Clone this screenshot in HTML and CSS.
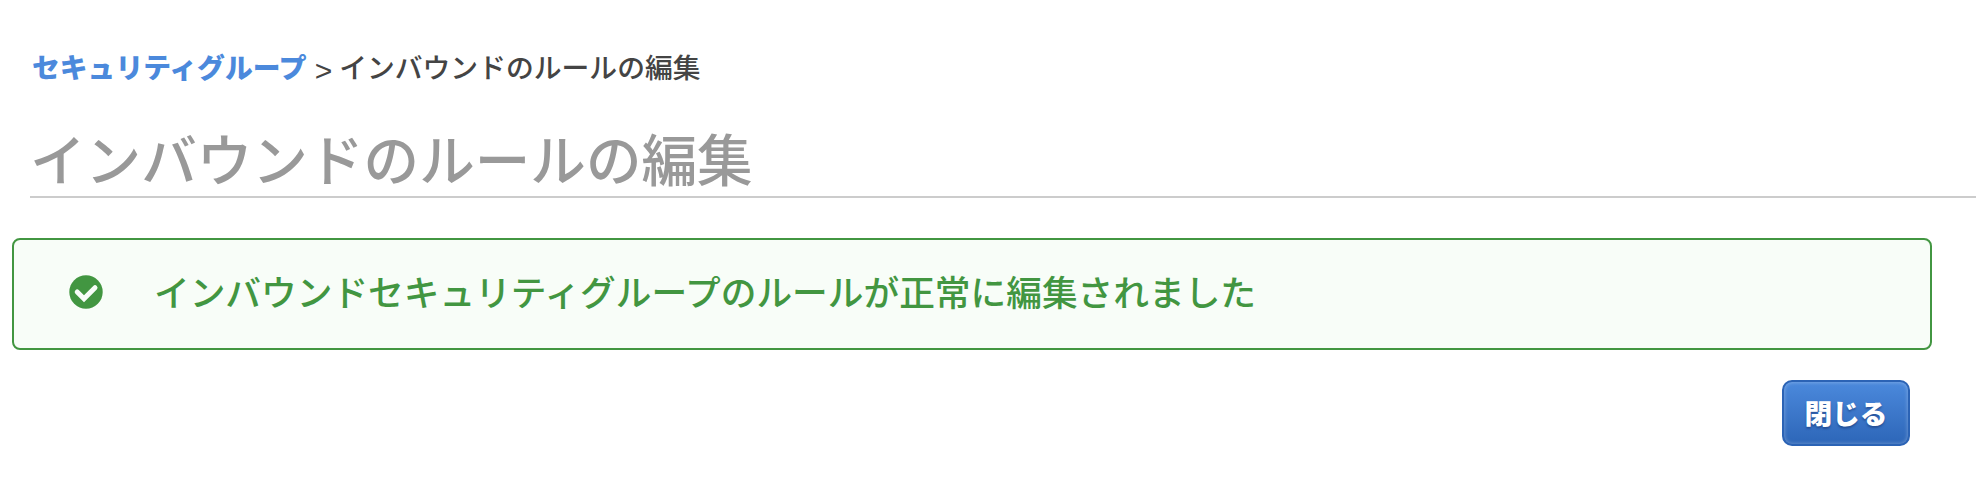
FILE: index.html
```
<!DOCTYPE html>
<html lang="ja">
<head>
<meta charset="utf-8">
<title>インバウンドのルールの編集</title>
<link rel="stylesheet" href="styles.css">
</head>
<body>
<main class="page">
  <nav class="breadcrumb"><a class="crumb-link" href="#">セキュリティグループ</a><span class="crumb-separator">&gt;</span><span class="crumb-current">インバウンドのルールの編集</span></nav>
  <h1 class="title"><span class="title-text">インバウンドのルールの編集</span></h1>
  <section class="alert">
    <svg class="alert-icon" viewBox="0 0 34 34"><circle cx="17" cy="17" r="16.7" fill="#429641"/><path d="M8.2 16.9l6.8 6.8L26 12.7" fill="none" stroke="#f8fdf8" stroke-width="5" stroke-linecap="round" stroke-linejoin="miter"/></svg>
    <p class="alert-text"><span class="alert-message">インバウンドセキュリティグループのルールが正常に編集されました</span></p>
  </section>
  <footer class="actions"><button class="close-button">閉じる</button></footer>
</main>
</body>
</html>
```
FILE: styles.css
```
* { box-sizing: border-box; }
body {
  margin: 0;
  height: 486px;
  overflow: hidden;
  background: #fff;
  font-family: "Noto Sans CJK JP", sans-serif;
}
.page { display: flex; flex-direction: column; }
.breadcrumb {
  display: flex;
  margin: 46px 0 0 32px;
  height: 41px;
  line-height: 40px;
  font-size: 27.8px;
  font-weight: 500;
  color: #444;
  white-space: nowrap;
}
.crumb-link { color: #4b89dc; font-weight: 900; text-decoration: none; }
.crumb-separator {
  margin: 5px 7px 0 8px;
  font: 400 30px/40px "Liberation Sans", sans-serif;
}
.title {
  margin: 33px 0 0 30px;
  height: 78px;
  border-bottom: 2px solid #ccc;
  line-height: 74px;
  font-size: 55.6px;
  font-weight: 500;
  color: #999;
  white-space: nowrap;
}
.alert {
  display: flex;
  align-items: center;
  width: 1920px;
  height: 112px;
  margin: 40px 0 0 12px;
  padding: 0 0 4px 55px;
  border: 2px solid #429641;
  border-radius: 8px;
  background: #f8fdf8;
}
.alert-icon { width: 34px; height: 34px; }
.alert-text {
  margin: 0 0 3px 51px;
  font-size: 35.7px;
  font-weight: 500;
  line-height: 50px;
  color: #429641;
  white-space: nowrap;
}
.actions { display: flex; justify-content: flex-end; margin: 30px 66px 0 0; }
.close-button {
  width: 128px;
  height: 66px;
  padding: 0 0 2px;
  border: 2px solid #2b63b5;
  border-radius: 10px;
  background: linear-gradient(#4b89dc, #2d66b8);
  box-shadow: inset 0 0 4px rgba(255, 255, 255, 0.35);
  color: #fff;
  font: 900 27.7px/40px "Noto Sans CJK JP", sans-serif;
  text-shadow: 0 2px 2px rgba(20, 50, 110, 0.5);
}
```
